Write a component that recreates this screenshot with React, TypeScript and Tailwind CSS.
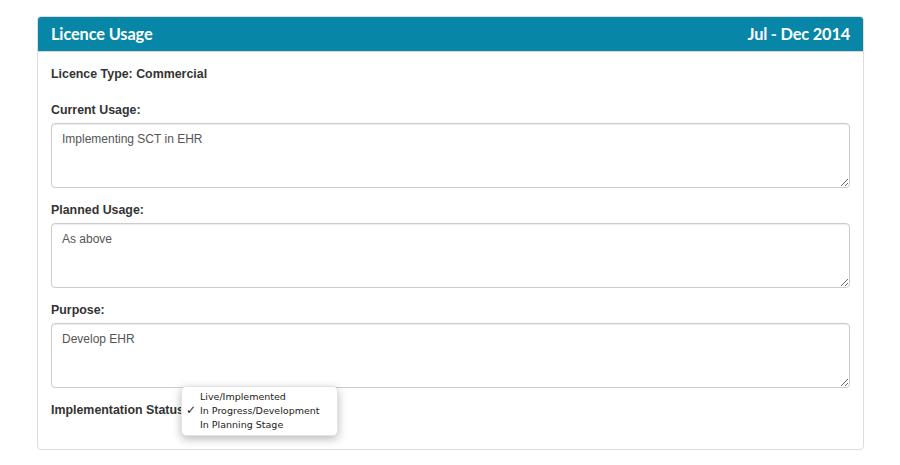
const fields = [
  { label: 'Current Usage:', value: 'Implementing SCT in EHR' },
  { label: 'Planned Usage:', value: 'As above' },
  { label: 'Purpose:', value: 'Develop EHR' },
]

const statuses = ['Live/Implemented', 'In Progress/Development', 'In Planning Stage']

export default function App() {
  const selected = 'In Progress/Development'

  return (
    <div className="min-h-screen bg-white pt-[16px] pl-[37px] font-['Liberation_Sans',Arial,sans-serif]">
      <div className="w-[827px] rounded-[4px] border border-[#dddddd]">
        <div className="flex h-[35px] items-center justify-between rounded-t-[3px] border-b border-[#d6d6d6] bg-[#0786a7] px-[13px] text-white">
          <h1 className="font-['Lato',sans-serif] text-[16.3px] font-bold tracking-[-0.1px]">Licence Usage</h1>
          <span className="font-['Lato',sans-serif] text-[16.4px] font-bold tracking-[-0.2px]">Jul - Dec 2014</span>
        </div>

        <div className="px-[13px] pt-[14px] pb-[30px] text-[12.4px] text-[#333333]">
          <p className="mb-[19px] h-[17px] leading-[17px] font-bold">Licence Type: Commercial</p>

          {fields.map(field => (
            <div key={field.label} className="mb-[14px]">
              <label className="mb-[4px] block h-[17px] leading-[17px] font-bold">{field.label}</label>
              <textarea
                defaultValue={field.value}
                className="block h-[65px] w-[799px] rounded-[4px] border border-[#cccccc] px-[10px] py-[7px] text-[12px] leading-[17px] text-[#555555] shadow-[inset_0_1px_1px_rgba(0,0,0,0.075)] outline-none"
              />
            </div>
          ))}

          <div className="relative h-[17px] leading-[17px] font-bold">
            Implementation Status:
            {/* open native select menu, drawn over the label */}
            <div className="absolute left-[130px] top-[-16px] w-[157px] rounded-[5px] border border-[#e3e3e3] bg-white py-[3px] font-['DejaVu_Sans',sans-serif] text-[9.5px] font-normal text-[#222222] shadow-[0_3px_10px_rgba(0,0,0,0.28)]">
              {statuses.map(status => (
                <div key={status} className="relative h-[14px] pl-[18px] leading-[14px]">
                  {status === selected && (
                    <span className="absolute left-[4px] top-[-1px] text-[12px] font-bold">✓</span>
                  )}
                  {status}
                </div>
              ))}
            </div>
          </div>
        </div>
      </div>
    </div>
  )
}
